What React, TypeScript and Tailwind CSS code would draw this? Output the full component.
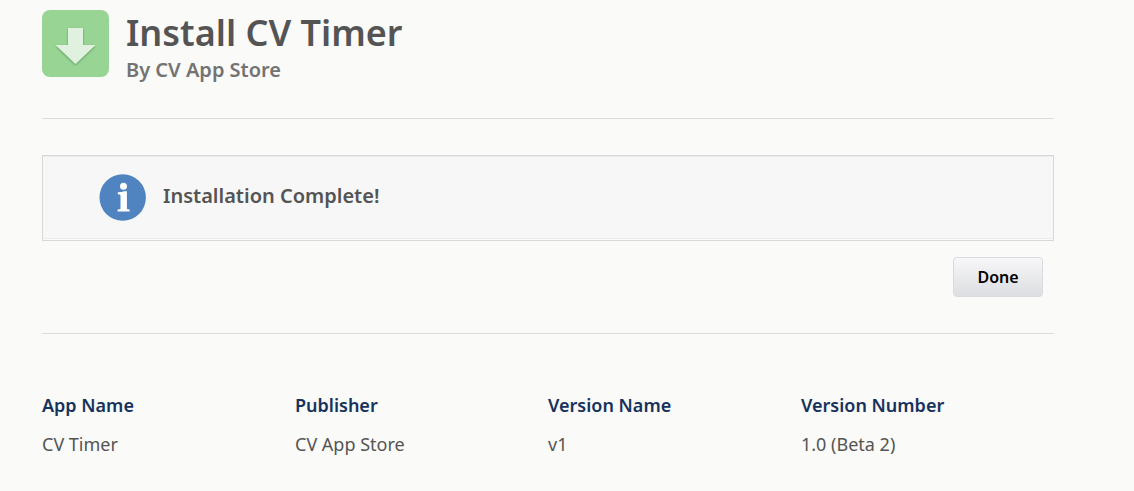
const details = [
  { label: "App Name", value: "CV Timer" },
  { label: "Publisher", value: "CV App Store" },
  { label: "Version Name", value: "v1" },
  { label: "Version Number", value: "1.0 (Beta 2)" },
];

function InstallIcon() {
  return (
    <svg viewBox="0 0 67 67" className="size-[67px] shrink-0" aria-hidden="true">
      <defs>
        <filter id="arrow-shadow" x="-20%" y="-20%" width="140%" height="140%">
          <feDropShadow dx="0" dy="1" stdDeviation="1.3" floodColor="#2f6b2c" floodOpacity="0.6" />
        </filter>
      </defs>
      <rect width="67" height="67" rx="8" fill="#98d594" />
      <path
        d="M26 18H41V35H53.500L33.500 54L13.500 35H26Z"
        fill="#e0f2df"
        filter="url(#arrow-shadow)"
      />
    </svg>
  );
}

function InfoIcon() {
  return (
    <svg viewBox="0 0 47 47" className="size-[47px] shrink-0" aria-hidden="true">
      <circle cx="23.700" cy="23.500" r="23.200" fill="#4f84c0" />
      <circle cx="24.500" cy="12.300" r="3.500" fill="#fff" />
      <path
        d="M18.800 18.200Q23.500 18.200 25 17.200H27.900V34.800Q28.200 35.500 30.600 35.600V37.600H18.600V35.600Q21.300 35.500 21.500 34.800V21.200Q21.300 20.300 18.800 20.200Z"
        fill="#fff"
      />
    </svg>
  );
}

export default function App() {
  return (
    <main className="min-h-screen bg-[#fafaf8] pt-[10px] pr-20 pb-8 pl-[42px] font-['Noto_Sans',sans-serif] text-[#545454]">
      <header className="flex gap-[17px] border-b border-[#dddddd] pb-[35px]">
        <InstallIcon />
        <div>
          <h1 className="text-[36px] leading-[46px] font-semibold">Install CV Timer</h1>
          <p className="text-[20px] leading-[27px] font-semibold text-[#737373]">By CV App Store</p>
        </div>
      </header>

      <section
        role="status"
        className="mt-9 flex items-start gap-[17px] border border-[#d8d8d8] bg-[#f7f7f7] pt-[18px] pb-[19px] pl-14 shadow-[inset_0_1px_0_#ececec,inset_0_-1px_0_#fafafa,inset_0_-2px_0_#ececec]"
      >
        <InfoIcon />
        <p className="pt-2 text-[20px] leading-[27px] font-semibold">Installation Complete!</p>
      </section>

      <div className="flex justify-end border-b border-[#dddddd] pt-4 pr-[11px] pb-9">
        <button
          type="button"
          className="h-10 w-[90px] rounded border border-[#d8dadd] bg-linear-to-b from-[#f7f7f9] to-[#dddee1] text-[16px] font-semibold text-black"
        >
          Done
        </button>
      </div>

      <table className="mt-[59px] w-full table-fixed text-left text-[18px] leading-6">
        <thead>
          <tr>
            {details.map((item) => (
              <th key={item.label} scope="col" className="pb-[15px] font-semibold text-[#16325c]">
                {item.label}
              </th>
            ))}
          </tr>
        </thead>
        <tbody>
          <tr>
            {details.map((item) => (
              <td key={item.label}>{item.value}</td>
            ))}
          </tr>
        </tbody>
      </table>
    </main>
  );
}
